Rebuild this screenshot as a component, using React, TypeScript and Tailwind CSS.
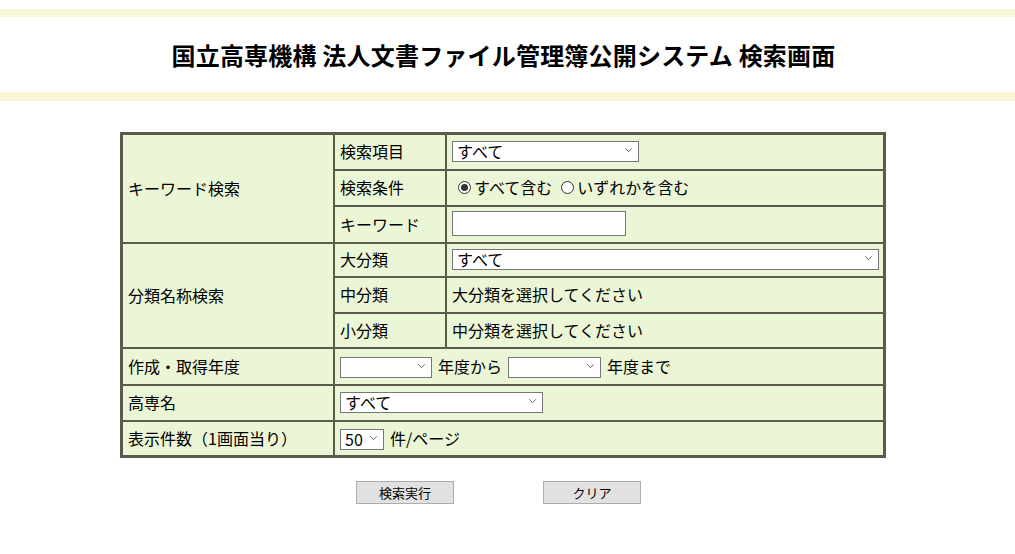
import React from "react";

const FONT = { fontFamily: '"Noto Sans CJK JP", "Noto Sans", sans-serif' };

const Chevron = () => (
  <svg
    viewBox="0 0 10 6"
    className="pointer-events-none absolute right-[6px] top-1/2 h-[5px] w-[9px] -translate-y-1/2"
  >
    <path d="M1 1l4 4 4-4" fill="none" stroke="#555" strokeWidth="1.1" />
  </svg>
);

const Select = ({ width, value }: { width: string; value?: string }) => (
  <div className={`relative inline-block h-[21px] ${width}`}>
    <select
      className="h-full w-full appearance-none rounded-none border border-[#767676] bg-white pl-[4px] pr-4 text-[16px] leading-[19px] text-black outline-none"
      style={FONT}
      defaultValue={value ?? ""}
    >
      <option value={value ?? ""}>{value ?? ""}</option>
    </select>
    <Chevron />
  </div>
);

const Radio = ({ checked }: { checked?: boolean }) => (
  <span className="inline-flex h-[13px] w-[13px] items-center justify-center rounded-full border border-[#333] bg-white">
    {checked && <span className="h-[7px] w-[7px] rounded-full bg-[#333]" />}
  </span>
);

const cell = "border border-[#5b5b4b] bg-[#eaf6d6] px-[5px] pb-[2px] align-middle";

export default function App() {
  return (
    <div className="min-h-screen bg-white text-[16px] text-black" style={FONT}>
      {/* Header */}
      <div className="pt-[9px]">
        <div className="h-[8px] bg-[#f8f8d7]" />
        <div className="flex h-[75px] items-center justify-center pr-[8px]">
          <h1 className="text-[24px] font-bold tracking-[0.2px]">
            国立高専機構 法人文書ファイル管理簿公開システム 検索画面
          </h1>
        </div>
        <div className="h-[9px] bg-[#f8f8d7]" />
      </div>

      {/* Search form */}
      <div className="ml-[120px] mt-[31px] w-[766px]">
        <table
          className="w-[766px] table-fixed border-2 border-[#5b5b4b]"
          style={{ borderCollapse: "separate", borderSpacing: 0 }}
        >
          <colgroup>
            <col className="w-[212px]" />
            <col className="w-[112px]" />
            <col />
          </colgroup>
          <tbody>
            <tr className="h-[36px]">
              <td className={cell} rowSpan={3}>
                キーワード検索
              </td>
              <td className={cell}>検索項目</td>
              <td className={cell}>
                <Select width="w-[187px]" value="すべて" />
              </td>
            </tr>
            <tr className="h-[36px]">
              <td className={cell}>検索条件</td>
              <td className={cell}>
                <div className="flex items-center pl-[6px]">
                  <Radio checked />
                  <span className="ml-[3px]">すべて含む</span>
                  <span className="ml-[9px]">
                    <Radio />
                  </span>
                  <span className="ml-[3px]">いずれかを含む</span>
                </div>
              </td>
            </tr>
            <tr className="h-[37px]">
              <td className={cell}>キーワード</td>
              <td className={cell}>
                <input
                  type="text"
                  className="block h-[25px] w-[174px] rounded-none border border-[#767676] bg-white outline-none"
                />
              </td>
            </tr>
            <tr className="h-[34px]">
              <td className={cell} rowSpan={3}>
                分類名称検索
              </td>
              <td className={cell}>大分類</td>
              <td className={cell}>
                <Select width="w-[427px]" value="すべて" />
              </td>
            </tr>
            <tr className="h-[36px]">
              <td className={cell}>中分類</td>
              <td className={cell}>大分類を選択してください</td>
            </tr>
            <tr className="h-[35px]">
              <td className={cell}>小分類</td>
              <td className={cell}>中分類を選択してください</td>
            </tr>
            <tr className="h-[37px]">
              <td className={cell}>作成・取得年度</td>
              <td className={cell} colSpan={2}>
                <div className="flex items-center gap-[6px]">
                  <Select width="w-[92px]" />
                  <span>年度から</span>
                  <Select width="w-[93px]" />
                  <span>年度まで</span>
                </div>
              </td>
            </tr>
            <tr className="h-[36px]">
              <td className={cell}>高専名</td>
              <td className={cell} colSpan={2}>
                <Select width="w-[203px]" value="すべて" />
              </td>
            </tr>
            <tr className="h-[35px]">
              <td className={cell}>表示件数（1画面当り）</td>
              <td className={cell} colSpan={2}>
                <div className="flex items-center gap-[6px]">
                  <Select width="w-[44px]" value="50" />
                  <span>件/ページ</span>
                </div>
              </td>
            </tr>
          </tbody>
        </table>

        {/* Buttons */}
        <div className="mt-[23px] flex pl-[236px]">
          <button className="h-[23px] w-[98px] border border-[#adadad] bg-[#e1e1e1] text-[13px] leading-none">
            検索実行
          </button>
          <button className="ml-[89px] h-[23px] w-[98px] border border-[#adadad] bg-[#e1e1e1] text-[13px] leading-none">
            クリア
          </button>
        </div>
      </div>
    </div>
  );
}
